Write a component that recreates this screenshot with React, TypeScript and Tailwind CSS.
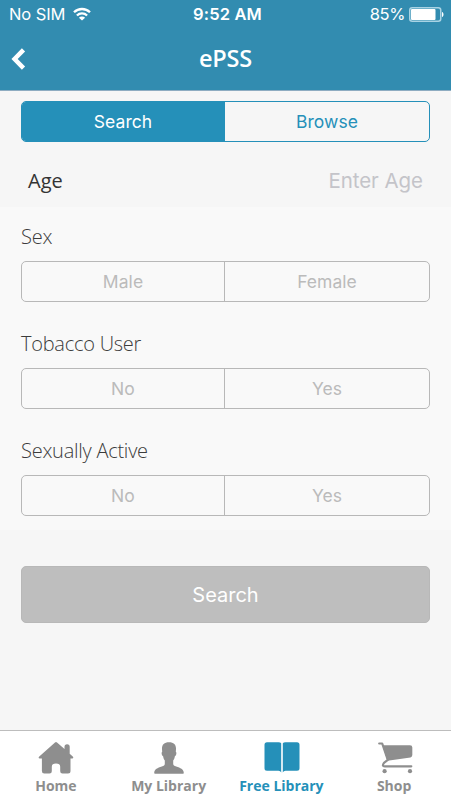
import React from "react";

const inter = "font-['Inter','Liberation_Sans',sans-serif]";
const open = "font-['Open_Sans','Noto_Sans',sans-serif]";

function StatusBar() {
  return (
    <div className={`${inter} grid h-[29px] grid-cols-3 items-center pl-[9px] pr-[7px] text-white`}>
      <div className="flex items-center gap-[8px]">
        <span className="text-[16.5px] leading-none tracking-[-0.1px]">No SIM</span>
        <svg className="-mt-[2px]" width="18" height="14" viewBox="0 0 18 14" fill="none" stroke="currentColor" strokeWidth="2.3">
          <path d="M1 5.300a11.400 11.400 0 0 1 16 0" />
          <path d="M3.900 8.500a7.300 7.300 0 0 1 10.200 0" />
          <path d="M9 13.600 5.900 10.700a4.400 4.400 0 0 1 6.200 0z" fill="currentColor" stroke="none" />
        </svg>
      </div>
      <span className="pl-[2px] text-center text-[16.500px] font-semibold leading-none tracking-[0.15px]">9:52 AM</span>
      <div className="flex items-center justify-end gap-[4px]">
        <span className="text-[16.5px] leading-none tracking-[-0.4px]">85%</span>
        <svg width="35" height="15" viewBox="0 0 35 15">
          <rect x="0.75" y="0.75" width="31" height="13.5" rx="2.5" fill="none" stroke="#a9d3e4" strokeWidth="1.5" />
          <rect x="2" y="2" width="24.5" height="11" rx="1" fill="#fff" />
          <path d="M33 5c2 .5 2 4.500 0 5z" fill="#fff" />
        </svg>
      </div>
    </div>
  );
}

function Segments({ items, active = -1, blue = false }: { items: string[]; active?: number; blue?: boolean }) {
  return (
    <div
      className={`${inter} mx-[21px] flex h-[41px] overflow-hidden rounded-[5px] border text-[17.5px] tracking-[0.05px] ${
        blue ? "border-[#2590b9] text-[#2590b9]" : "border-[#b8b8b8] text-[#bbbbbb]"
      }`}
    >
      {items.map((label, i) => (
        <div
          key={label}
          className={`flex items-center justify-center pt-[2px] ${
            i > 0 ? (blue ? "flex-1 border-l border-[#2590b9]" : "flex-1 border-l border-[#b8b8b8]") : "w-[202px]"
          } ${i === active ? "bg-[#2590b9] text-white" : ""}`}
        >
          {label}
        </div>
      ))}
    </div>
  );
}

const questions = [
  { label: "Sex", options: ["Male", "Female"] },
  { label: "Tobacco User", options: ["No", "Yes"] },
  { label: "Sexually Active", options: ["No", "Yes"] },
];

const tabs = [
  {
    label: "Home",
    icon: (
      <svg width="36" height="32" viewBox="0 0 36 32" fill="currentColor">
        <path d="M17 .5q1-.8 2 0l7.500 6.500V4.800q0-2.600 2.600-2.600t2.600 2.600v7l3.300 3q.8 1.700-.8 1.700h-1.700v12.500q0 2.500-2.500 2.500h-5.500q-2.300 0-2.300-2.300v-4.500q0-3.200-4.200-3.200t-4.200 3.200v4.500q0 2.300-2.300 2.300h-5.200q-2.400 0-2.400-2.500V16.500H1.800q-1.800 0-.8-1.700z" />
      </svg>
    ),
  },
  {
    label: "My Library",
    icon: (
      <svg width="30" height="32" viewBox="0 0 30 32" fill="currentColor">
        <path d="M15 .3c5 0 7.300 2.700 7 7l-.2 2.500c1 .3.700 3.500-.9 4.500-.4 2.200-1 3.400-1.700 4.300v3.200c0 1.500 1 2.100 3 2.800 4.300 1.400 7.300 2.700 7.600 6.300q0 .8-.8.800H1q-.8 0-.8-.8c.3-3.600 3.300-4.900 7.600-6.300 2-.7 3-1.300 3-2.800v-3.200c-.7-.9-1.300-2.100-1.700-4.300-1.600-1-1.900-4.200-.9-4.500L8 7.300C7.700 3 10 .3 15 .3z" />
      </svg>
    ),
  },
  {
    label: "Free Library",
    icon: (
      <svg width="36" height="32" viewBox="0 0 36 32" fill="currentColor">
        <path d="M3 .2h11.500q2 0 2.700 1.100v29.100q-.7-1.700-2.700-1.700H3Q.5 28.700.5 26.200V2.700Q.5.200 3 .2zM33 .2H21.500q-2 0-2.700 1.100v29.100q.7-1.700 2.700-1.700H33q2.500 0 2.500-2.500V2.700q0-2.500-2.500-2.500z" />
      </svg>
    ),
  },
  {
    label: "Shop",
    icon: (
      <svg width="36" height="32" viewBox="0 0 36 32">
        <path d="M5.500 3.300H33q2.300 0 2.300 2.200v7.500q0 2-1.800 2.400L10.500 18.800z" fill="currentColor" />
        <path d="M2.200 1.500h3L10.800 17.800 7 20.800q-2.500 3.500.8 3.500h26.500" fill="none" stroke="currentColor" strokeWidth="2.200" strokeLinecap="round" strokeLinejoin="round" />
        <circle cx="7.600" cy="29.200" r="2.100" fill="currentColor" />
        <circle cx="33" cy="29.200" r="2.100" fill="currentColor" />
      </svg>
    ),
  },
];

export default function App() {
  return (
    <div className="flex h-[800px] w-[451px] flex-col overflow-hidden bg-[#f6f6f6]">
      <header className="h-[91px] border-b border-[#8eacc1] bg-[#328cb0] text-white">
        <StatusBar />
        <div className="grid h-[60px] grid-cols-3 items-center px-[11px]">
          <svg width="15" height="22" viewBox="0 0 15 22" fill="none" stroke="currentColor" strokeWidth="4.500">
            <path d="M12.500 1.900 3.600 11l8.900 9.100" strokeLinejoin="miter" />
          </svg>
          <h1 className={`${open} text-center text-[23.5px] font-semibold leading-none tracking-[-0.2px]`}>ePSS</h1>
        </div>
      </header>
      <main className="flex-1">
        <div className="pt-[10px]">
          <Segments items={["Search", "Browse"]} active={0} blue />
        </div>
        <div className="flex h-[65px] items-center justify-between px-7 pt-[13px]">
          <span className={`${open} text-[20px] leading-none text-[#333]`}>Age</span>
          <span className={`${inter} text-[20.5px] leading-none tracking-[-0.05px] text-[#c4c4c9]`}>Enter Age</span>
        </div>
        <section className="h-[323px] bg-[#f9f9f9]">
          {questions.map((q) => (
            <div key={q.label} className="pb-3">
              <div
                className={`${open} flex h-[54px] items-center pl-[21px] pt-[6px] text-[20px] font-light tracking-[-0.25px] text-[#3c3c3c]`}
              >
                {q.label}
              </div>
              <Segments items={q.options} />
            </div>
          ))}
        </section>
        <button
          className={`${inter} mx-[21px] mt-9 block h-[57px] w-[409px] rounded-[5px] border border-[#b8b8b8] bg-[#bebebe] text-[20px] text-white`}
        >
          Search
        </button>
      </main>
      <nav className="grid h-[70px] grid-cols-4 border-t border-[#bdbdbd] bg-white">
        {tabs.map((t, i) => (
          <div
            key={t.label}
            className={`flex flex-col items-center pt-[11px] ${i === 2 ? "text-[#2590b9]" : "text-[#8e8e8e]"}`}
          >
            {t.icon}
            <span className={`${open} mt-[5px] whitespace-nowrap pr-px text-[14px] font-bold leading-none`}>{t.label}</span>
          </div>
        ))}
      </nav>
    </div>
  );
}
